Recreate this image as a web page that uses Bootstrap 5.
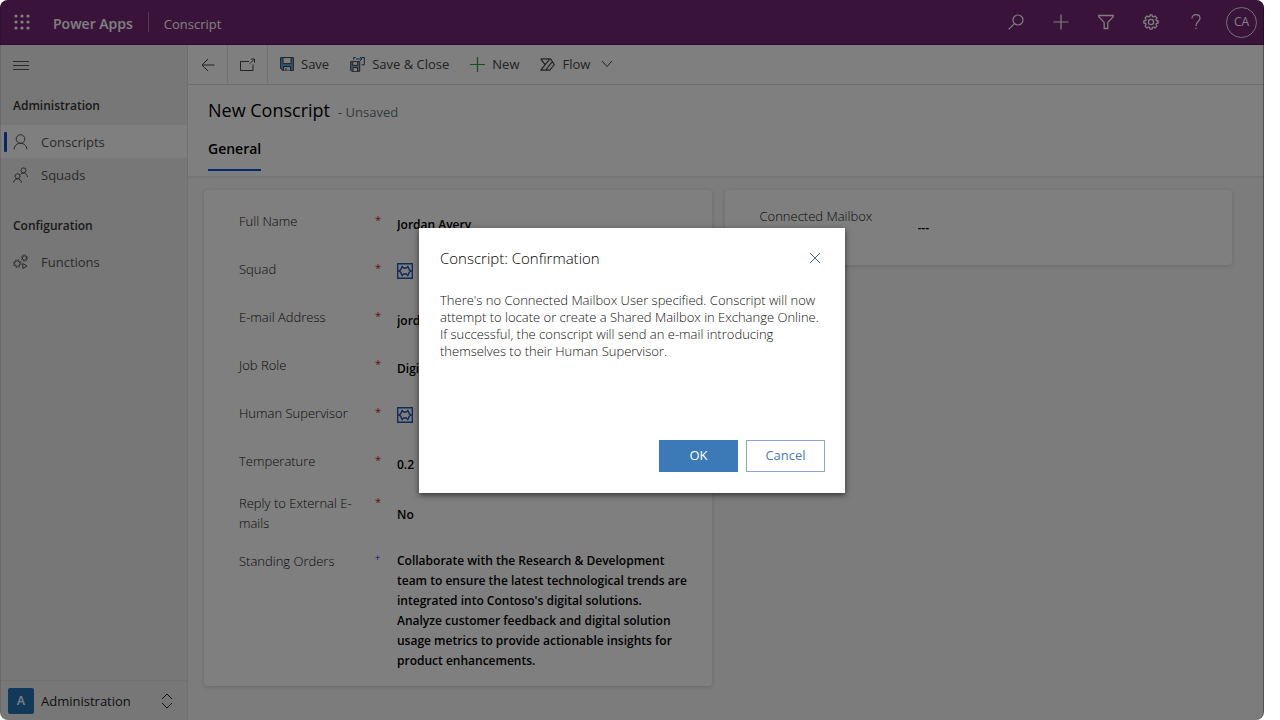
<!DOCTYPE html>
<html lang="en">
<head>
<meta charset="utf-8">
<meta name="viewport" content="width=device-width, initial-scale=1">
<title>New Conscript - Power Apps</title>
<link href="https://cdn.jsdelivr.net/npm/bootstrap@5.3.0/dist/css/bootstrap.min.css" rel="stylesheet">
<style>
  body { font-family: "Open Sans", "Noto Sans", sans-serif; font-size: 13px; line-height: 20px; color: #484644; background: #fff; }
  svg { fill: none; stroke: currentColor; display: block; flex: none; }
  button { font: inherit; }
  .app-frame { min-height: 100vh; margin-right: 16px; border-radius: 8px; overflow: hidden; background: #f8f8f8; }
  .frame-edge { z-index: 2; pointer-events: none; border-right: 1px solid rgba(0,0,0,.35); border-left: 1px solid rgba(0,0,0,.12); border-radius: 8px; }
  .app-header { height: 45px; padding-left: 14px; padding-right: 7px; background: #742774; color: #fff; border-bottom: 1px solid #69106a; }
  .app-header .titles { gap: 15px; margin-left: 23px; }
  .app-header .brand { font-size: 14px; font-weight: 600; padding-top: 3px; }
  .app-header .rule { border-left: 1px solid #a674a6; height: 20px; }
  .app-header .area { padding-top: 3px; }
  .plain { border: 0; background: none; padding: 0; color: inherit; }
  .tools { gap: 29px; margin-right: 22px; }
  .avatar { width: 31px; height: 31px; border: 1px solid #fff; font-size: 12px; }
  .side { width: 188px; background: #efefef; border-right: 1px solid #e2e2e2; }
  .side .menu { padding: 12px 13px; height: 40px; color: #555; }
  .side h2 { font-size: 12px; font-weight: 600; line-height: 20px; color: #333; margin: 0; padding: 11px 13px 9px; }
  .side h2.next { margin-top: 14px; }
  .side .item { height: 33px; padding-left: 13px; gap: 12px; color: #555; }
  .side .item.active { background: #fff; position: relative; }
  .side .item.active::before { content: ""; position: absolute; left: 4px; top: 7px; width: 3px; height: 20px; background: #0b53ce; border-radius: 1px; }
  .side .switcher { height: 40px; padding-left: 8px; padding-right: 14px; border-top: 1px solid #d8d8d8; color: #222; gap: 7px; }
  .tile { width: 26px; height: 26px; background: #2673b4; color: #fff; border-radius: 2px; font-weight: 600; font-size: 12px; }
  .cmd { height: 40px; background: #fff; border-bottom: 1px solid #dcdcdc; color: #444; }
  .cmd .cell { width: 40px; border-right: 1px solid #e4e4e4; }
  .cmd .act { gap: 7px; margin-right: 21px; padding-bottom: 1px; }
  .record { background: #fff; padding: 12px 20px 0; border-bottom: 2px solid #ececec; height: 93px; color: #000; }
  .record h1 { font-size: 18px; line-height: 26px; font-weight: 500; margin: 0; }
  .record .tab { font-weight: 600; font-size: 14px; border-bottom: 2px solid #0b53ce; height: 32px; padding: 0 0 10px; margin-top: 16px; }
  .sheet { padding: 12px 32px 33px 16px; }
  .panel { background: #fff; border-radius: 4px; box-shadow: 0 1px 4px rgba(0,0,0,.16); }
  .panel-main { padding: 21px 22px 15px 35px; }
  .field { display: grid; grid-template-columns: 136px 22px 1fr; min-height: 48px; }
  .field.tight { min-height: 42px; }
  .field.two-line { padding-bottom: 18px; }
  .field label { max-width: 124px; color: #111; font-weight: 300; }
  .req { color: #c50f1f; font-size: 11px; line-height: 18px; }
  .rec { color: #1414cc; font-size: 9px; line-height: 14px; }
  .field input, .field textarea { font-size: 12px; font-weight: 600; color: #000; border: 0; background: none; padding: 0; min-width: 0; width: 100%; resize: none; overflow: hidden; outline: 0; }
  .field input { height: 26px; }
  .field textarea { display: block; height: 120px; }
  .lookup { height: 24px; }
  .lookup a { color: #1f58b0; }
  .mailbox { padding: 16px 35px 0; height: 75px; }
  .veil { background: rgba(0,0,0,.5); z-index: 1; }
  .dialog { width: 426px; min-height: 265px; padding: 20px 20px 21px 21px; background: #fff; box-shadow: 0 2px 6px rgba(0,0,0,.6); color: #111; }
  .dialog h2 { font-size: 15px; line-height: 20px; font-weight: 300; color: #000; margin: 0; }
  .dialog p { line-height: 17px; margin: 24px 0 0; font-weight: 300; }
  .dialog .btn { width: 79px; height: 32px; border-radius: 0; font-size: 13px; padding: 0; border-color: #8aa6d0; color: #4f7ab8; }
  .dialog .btn-ok { background: #3b79b7; border-color: #3b79b7; color: #fff; }
</style>
</head>
<body>
<div class="app-frame position-relative d-flex flex-column">
  <header class="app-header d-flex align-items-center">
    <button class="plain" aria-label="App launcher"><svg width="16" height="16" viewBox="0 0 16 16" style="fill:currentColor;stroke:none"><circle cx="2" cy="2" r="1.6"/><circle cx="8" cy="2" r="1.6"/><circle cx="14" cy="2" r="1.6"/><circle cx="2" cy="8" r="1.6"/><circle cx="8" cy="8" r="1.6"/><circle cx="14" cy="8" r="1.6"/><circle cx="2" cy="14" r="1.6"/><circle cx="8" cy="14" r="1.6"/><circle cx="14" cy="14" r="1.6"/></svg></button>
    <div class="titles d-flex align-items-center">
      <span class="brand">Power Apps</span>
      <span class="rule"></span>
      <span class="area">Conscript</span>
    </div>
    <div class="tools d-flex align-items-center ms-auto">
      <button class="plain" aria-label="Search"><svg width="16" height="16" viewBox="0 0 16 16"><circle cx="10" cy="6" r="5" stroke-width="1.200"/><path stroke-width="1.200" d="M6.400 9.600.600 15.400"/></svg></button>
      <button class="plain" aria-label="Add"><svg width="16" height="16" viewBox="0 0 16 16"><path stroke-width="1.200" d="M8 .500v15M.500 8h15"/></svg></button>
      <button class="plain" aria-label="Filter"><svg width="16" height="16" viewBox="0 0 16 16"><path stroke-width="1.300" d="M.8 1.500h14.400v1.200L9.800 8.400v6.100H6.200V8.400L.8 2.700z"/></svg></button>
      <button class="plain" aria-label="Settings"><svg width="16" height="16" viewBox="0 0 16 16"><path stroke-width="1.300" stroke-linejoin="round" d="M6.600 2.600 7 .8h2l.4 1.800 1 .4 1.600-1 1.900 1.900-1 1.600.4 1 1.900.5v2l-1.900.5-.4 1 1 1.600-1.900 1.900-1.600-1-1 .4L9 15.200H7l-.4-1.800-1-.4-1.600 1-1.900-1.900 1-1.600-.4-1L.8 9V7l1.900-.5.4-1-1-1.600L4 2l1.600 1z"/><circle cx="8" cy="8" r="2.600" stroke-width="1.300"/></svg></button>
      <button class="plain" aria-label="Help"><svg width="16" height="16" viewBox="0 0 16 16"><path stroke-width="1.200" d="M4 4.600C4 2 5.600.7 8 .7s4 1.400 4 3.700C12 7.500 8 7.600 8 11.500v.5M8 13.800v1.500"/></svg></button>
    </div>
    <button class="avatar plain rounded-circle border" aria-label="Account">CA</button>
  </header>

  <div class="d-flex flex-grow-1">
    <nav class="side d-flex flex-column flex-shrink-0">
      <div class="menu"><button class="plain" aria-label="Collapse menu"><svg width="16" height="16" viewBox="0 0 16 16"><path d="M0 4.500h16M0 8.500h16M0 12.500h16"/></svg></button></div>
      <h2>Administration</h2>
      <a href="#" class="item active d-flex align-items-center text-decoration-none"><svg width="16" height="16" viewBox="0 0 16 16"><circle cx="7.500" cy="5" r="4.300"/><path d="M1 15.500c.4-4 3-6.200 6.500-6.200s6.100 2.200 6.500 6.200"/></svg>Conscripts</a>
      <a href="#" class="item d-flex align-items-center text-decoration-none"><svg width="16" height="16" viewBox="0 0 16 16"><circle cx="10.500" cy="3.400" r="2.500"/><path d="M7.300 7.400c1.800-2 6.600-2 7.200 2.600"/><circle cx="4.500" cy="9.200" r="2.500"/><path d="M.6 15.600c.2-5 7.600-5 7.800 0"/></svg>Squads</a>
      <h2 class="next">Configuration</h2>
      <a href="#" class="item d-flex align-items-center text-decoration-none"><svg width="16" height="16" viewBox="0 0 16 16"><circle cx="4.300" cy="9.600" r="2.800"/><circle cx="4.300" cy="9.600" r="3.900" stroke-dasharray="1.500 1.560"/><circle cx="11.500" cy="4" r="2.200"/><circle cx="11.500" cy="4" r="3.200" stroke-dasharray="1.200 1.310"/><path d="M9.800 9.500v5l4.200-2.500z"/></svg>Functions</a>
      <button class="switcher plain border-top d-flex align-items-center w-100 mt-auto"><span class="tile d-flex align-items-center justify-content-center">A</span>Administration<svg class="ms-auto" width="12" height="16" viewBox="0 0 12 16"><path d="m1 6 5-5 5 5M1 10l5 5 5-5"/></svg></button>
    </nav>

    <main class="flex-grow-1">
      <div class="cmd d-flex align-items-stretch">
        <button class="plain cell border-end d-flex align-items-center justify-content-center" aria-label="Back"><svg width="14" height="14" viewBox="0 0 14 14"><path d="M13.500 7H1M7 1 1 7l6 6"/></svg></button>
        <button class="plain cell border-end d-flex align-items-center justify-content-center" aria-label="Open in new window"><svg width="16" height="14" viewBox="0 0 16 14"><path d="M9 3.500H.5v9h12.500V6.500M10 5.500l4.300-4.300M11 1h3.500v3.500"/></svg></button>
        <button class="plain act d-flex align-items-center ms-2 ps-1"><svg width="14" height="14" viewBox="0 0 14 14"><path d="M.6.600h12.800v12.800H2.500L.6 11.500z" fill="#5aa9dc"/><path d="M3 .600h8v6H3z" fill="#fff"/><path d="M3.500 13.400V9.500h7v3.900M6 11v2.400" fill="#eee"/></svg>Save</button>
        <button class="plain act d-flex align-items-center"><svg width="15" height="16" viewBox="0 0 15 16"><path d="M.7 5.600h9v9.700h-8l-1-1z" fill="#8bafd0"/><path d="M2.700 5.600h5v3.800h-5zM3 15v-3.500h4.500V15" fill="#fff"/><path d="M3.700 3.800V1.500h2M11.500 1.500h2.800v7.300h-2.800"/><path d="M6 3h6M10 1l2 2-2 2" stroke="#0b63c4"/></svg>Save &amp; Close</button>
        <button class="plain act d-flex align-items-center"><svg width="15" height="15" viewBox="0 0 15 15"><path stroke="#18a04b" stroke-width="1.200" d="M7.500 0v15M0 7.500h15"/></svg>New</button>
        <button class="plain act d-flex align-items-center"><svg width="15" height="13" viewBox="0 0 15 13"><path stroke-width="1.200" stroke-linejoin="round" d="M.8.800h9.700l3.800 5.700-4.500 5.700H.8l9-11.400M.8.800l4 5.500M5.600 12.200 12.300 3.700"/></svg>Flow<svg class="ms-1" width="12" height="8" viewBox="0 0 12 8"><path d="m1 1 5 5.500L11 1"/></svg></button>
      </div>

      <section class="record d-flex flex-column align-items-start">
        <div class="d-flex align-items-baseline gap-2"><h1>New Conscript</h1><span class="text-secondary">- Unsaved</span></div>
        <button class="plain tab border-top-0">General</button>
      </section>

      <form class="sheet d-flex align-items-start">
        <div class="row flex-fill align-items-start" style="--bs-gutter-x:13px">
          <div class="col-6"><div class="panel panel-main">
            <div class="field"><label for="fn">Full Name</label><span class="req">*</span><input id="fn" value="Jordan Avery"></div>
            <div class="field"><label>Squad</label><span class="req">*</span><div class="lookup d-flex align-items-center"><a href="#" aria-label="Squad"><svg width="16" height="16" viewBox="0 0 16 16"><path d="M.7.700h14.600v14.600H.7zM5.200 3.500 6.500 5h3l1.300-1.500 1.200 2.200v1L14 8l-2 1.300v1l-1.200 2.200L9.500 11h-3l-1.300 1.500L4 10.300v-1L2 8l2-1.300v-1z" stroke-width="1.400"/></svg></a></div></div>
            <div class="field"><label for="em">E-mail Address</label><span class="req">*</span><input id="em" value="jordan"></div>
            <div class="field"><label for="jr">Job Role</label><span class="req">*</span><input id="jr" value="Digital"></div>
            <div class="field"><label>Human Supervisor</label><span class="req">*</span><div class="lookup d-flex align-items-center"><a href="#" aria-label="Human Supervisor"><svg width="16" height="16" viewBox="0 0 16 16"><path d="M.7.700h14.600v14.600H.7zM5.200 3.500 6.500 5h3l1.300-1.500 1.200 2.200v1L14 8l-2 1.300v1l-1.200 2.200L9.500 11h-3l-1.300 1.500L4 10.300v-1L2 8l2-1.300v-1z" stroke-width="1.400"/></svg></a></div></div>
            <div class="field tight"><label for="tp">Temperature</label><span class="req">*</span><input id="tp" value="0.2"></div>
            <div class="field two-line"><label for="rp">Reply to External E-mails</label><span class="req">*</span><input id="rp" class="mt-2" value="No"></div>
            <div class="field"><label for="so">Standing Orders</label><span class="rec">+</span><textarea id="so">Collaborate with the Research &amp; Development team to ensure the latest technological trends are integrated into Contoso's digital solutions. Analyze customer feedback and digital solution usage metrics to provide actionable insights for product enhancements.</textarea></div>
          </div></div>
          <div class="col-6"><div class="panel mailbox">
            <div class="field"><label for="mb">Connected Mailbox</label><span></span><input id="mb" class="mt-2" value="---"></div>
          </div></div>
        </div>
      </form>
    </main>
  </div>

  <div class="veil position-absolute top-0 start-0 w-100 h-100 d-flex align-items-center justify-content-center">
    <div class="dialog d-flex flex-column" role="dialog" aria-modal="true" aria-labelledby="dlg">
      <div class="d-flex justify-content-between align-items-center">
        <h2 id="dlg">Conscript: Confirmation</h2>
        <button class="plain me-1" aria-label="Close"><svg width="12" height="12" viewBox="0 0 12 12"><path stroke="#4a6a88" d="m1 1 10 10M11 1 1 11"/></svg></button>
      </div>
      <p>There's no Connected Mailbox User specified. Conscript will now attempt to locate or create a Shared Mailbox in Exchange Online. If successful, the conscript will send an e-mail introducing themselves to their Human Supervisor.</p>
      <div class="d-flex justify-content-end gap-2 mt-auto">
        <button class="btn btn-ok">OK</button>
        <button class="btn">Cancel</button>
      </div>
    </div>
  </div>
  <div class="frame-edge position-absolute top-0 start-0 w-100 h-100"></div>
</div>
<script src="https://cdn.jsdelivr.net/npm/bootstrap@5.3.0/dist/js/bootstrap.bundle.min.js"></script>
</body>
</html>
